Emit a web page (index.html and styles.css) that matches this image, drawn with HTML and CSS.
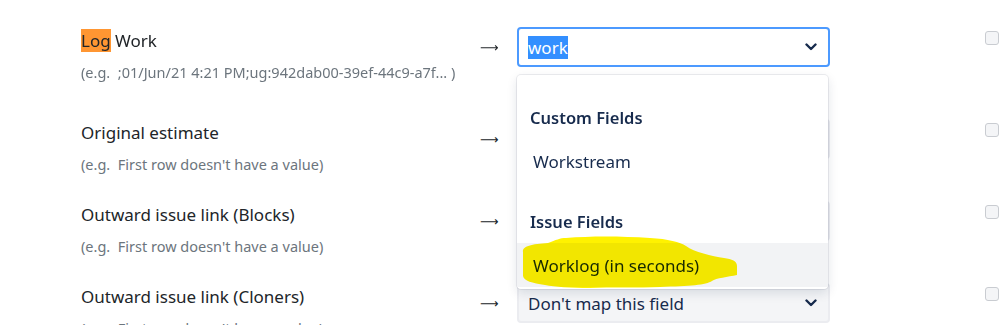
FILE: index.html
```html
<!DOCTYPE html>
<html lang="en">
<head>
<meta charset="utf-8">
<title>Field mapping</title>
<link rel="stylesheet" href="styles.css">
</head>
<body>
<div class="mapping">
  <div class="row row-first">
    <div class="label">
      <div class="title"><span class="find">Log</span> Work</div>
      <div class="example">(e.g.&nbsp; ;01/Jun/21 4:21 PM;ug:942dab00-39ef-44c9-a7f... )</div>
    </div>
    <div class="arrow">⟶</div>
    <div class="select-wrap">
      <div class="select select-focus">
        <span class="value"><span class="sel">work</span></span>
        <svg class="chev" width="12" height="8" viewBox="0 0 12 8"><path d="M1.5 1.5 L6 6 L10.5 1.5" fill="none" stroke="#172b4d" stroke-width="2.4" stroke-linecap="round" stroke-linejoin="round"/></svg>
      </div>
      <div class="menu">
        <div class="group">
          <div class="group-head">Custom Fields</div>
          <div class="option">Workstream</div>
        </div>
        <div class="group">
          <div class="group-head">Issue Fields</div>
          <div class="option option-hover">Worklog (in seconds)</div>
        </div>
        <svg class="marker" width="320" height="230" viewBox="517 75 320 230"><path d="M523 252 C522 246 532 244 548 243 C556 240 560 238 566 238 C590 236 620 236 650 238 C668 239 680 242 686 246 C694 252 712 256 724 258 C732 259 737 261 737 266 L737 275 C728 277 716 278 712 281 C706 285 690 286 660 287 C640 288 610 287 590 288 C570 288 555 287 545 285 C532 283 524 281 523 276 Z" fill="#fff200"/></svg>
      </div>
    </div>
    <div class="check"><span class="box"></span></div>
  </div>

  <div class="row">
    <div class="label">
      <div class="title">Original estimate</div>
      <div class="example">(e.g.&nbsp; First row doesn't have a value)</div>
    </div>
    <div class="arrow">⟶</div>
    <div class="select-wrap">
      <div class="select">
        <span class="value">Don't map this field</span>
        <svg class="chev" width="12" height="8" viewBox="0 0 12 8"><path d="M1.5 1.5 L6 6 L10.5 1.5" fill="none" stroke="#172b4d" stroke-width="2.4" stroke-linecap="round" stroke-linejoin="round"/></svg>
      </div>
    </div>
    <div class="check"><span class="box"></span></div>
  </div>

  <div class="row">
    <div class="label">
      <div class="title">Outward issue link (Blocks)</div>
      <div class="example">(e.g.&nbsp; First row doesn't have a value)</div>
    </div>
    <div class="arrow">⟶</div>
    <div class="select-wrap">
      <div class="select">
        <span class="value">Don't map this field</span>
        <svg class="chev" width="12" height="8" viewBox="0 0 12 8"><path d="M1.5 1.5 L6 6 L10.5 1.5" fill="none" stroke="#172b4d" stroke-width="2.4" stroke-linecap="round" stroke-linejoin="round"/></svg>
      </div>
    </div>
    <div class="check"><span class="box"></span></div>
  </div>

  <div class="row">
    <div class="label">
      <div class="title">Outward issue link (Cloners)</div>
      <div class="example">(e.g.&nbsp; First row doesn't have a value)</div>
    </div>
    <div class="arrow">⟶</div>
    <div class="select-wrap">
      <div class="select">
        <span class="value">Don't map this field</span>
        <svg class="chev" width="12" height="8" viewBox="0 0 12 8"><path d="M1.5 1.5 L6 6 L10.5 1.5" fill="none" stroke="#172b4d" stroke-width="2.4" stroke-linecap="round" stroke-linejoin="round"/></svg>
      </div>
    </div>
    <div class="check"><span class="box"></span></div>
  </div>
</div>
</body>
</html>
```

FILE: styles.css
```css
html, body {
  margin: 0;
  padding: 0;
  background: #ffffff;
  overflow: hidden;
}
body {
  font-family: "Noto Sans", "Open Sans", sans-serif;
  color: #212529;
}
.mapping {
  padding: 27px 0 0 81px;
  display: flex;
  flex-direction: column;
}
.row {
  display: flex;
  align-items: flex-start;
  height: 82px;
}
.row-first {
  height: 92px;
  position: relative;
  z-index: 2;
}
.label {
  width: 397px;
  padding-top: 1px;
}
.title {
  font-size: 17px;
  line-height: 26px;
  color: #212529;
}
.find {
  background: #ff9632;
}
.example {
  margin-top: 7px;
  font-size: 14.5px;
  line-height: 22px;
  color: #6c757d;
  white-space: nowrap;
}
.arrow {
  width: 37px;
  height: 40px;
  padding-left: 2px;
  display: flex;
  align-items: center;
  font-family: "DejaVu Sans", sans-serif;
  font-size: 13px;
  line-height: 1;
  color: #212529;
}
.select-wrap {
  position: relative;
  width: 313px;
}
.select {
  box-sizing: border-box;
  height: 40px;
  display: flex;
  align-items: center;
  justify-content: space-between;
  padding: 0 10px 0 9px;
  background: #f4f5f7;
  border: 2px solid #ebecf0;
  border-radius: 4px;
  font-size: 17px;
  color: #172b4d;
}
.select-focus {
  background: #ffffff;
  border-color: #4c9aff;
}
.sel {
  background: #338fff;
  color: #ffffff;
}
.chev {
  display: block;
  margin-right: 1px;
}
.menu {
  position: absolute;
  top: 48px;
  left: 0;
  width: 311px;
  box-sizing: border-box;
  background: #ffffff;
  border-radius: 4px;
  box-shadow: 0 0 0 1px rgba(9, 30, 66, 0.08), 0 4px 11px rgba(9, 30, 66, 0.12);
  padding: 4px 0 2px;
}
.group {
  padding-top: 16px;
}
.group-head {
  height: 44px;
  display: flex;
  align-items: center;
  padding-left: 13px;
  font-size: 16.5px;
  font-weight: 600;
  color: #172b4d;
}
.option {
  height: 44px;
  display: flex;
  align-items: center;
  padding-left: 16px;
  font-size: 17px;
  color: #172b4d;
}
.option-hover {
  background: #f2f3f5;
}
.marker {
  position: absolute;
  left: 0;
  top: 0;
  mix-blend-mode: multiply;
  pointer-events: none;
}
.check {
  margin-left: 155px;
  padding-top: 4px;
}
.box {
  display: block;
  box-sizing: border-box;
  width: 14px;
  height: 14px;
  border: 1px solid #c9ccd1;
  border-radius: 3px;
  background: #f4f5f7;
}
```
